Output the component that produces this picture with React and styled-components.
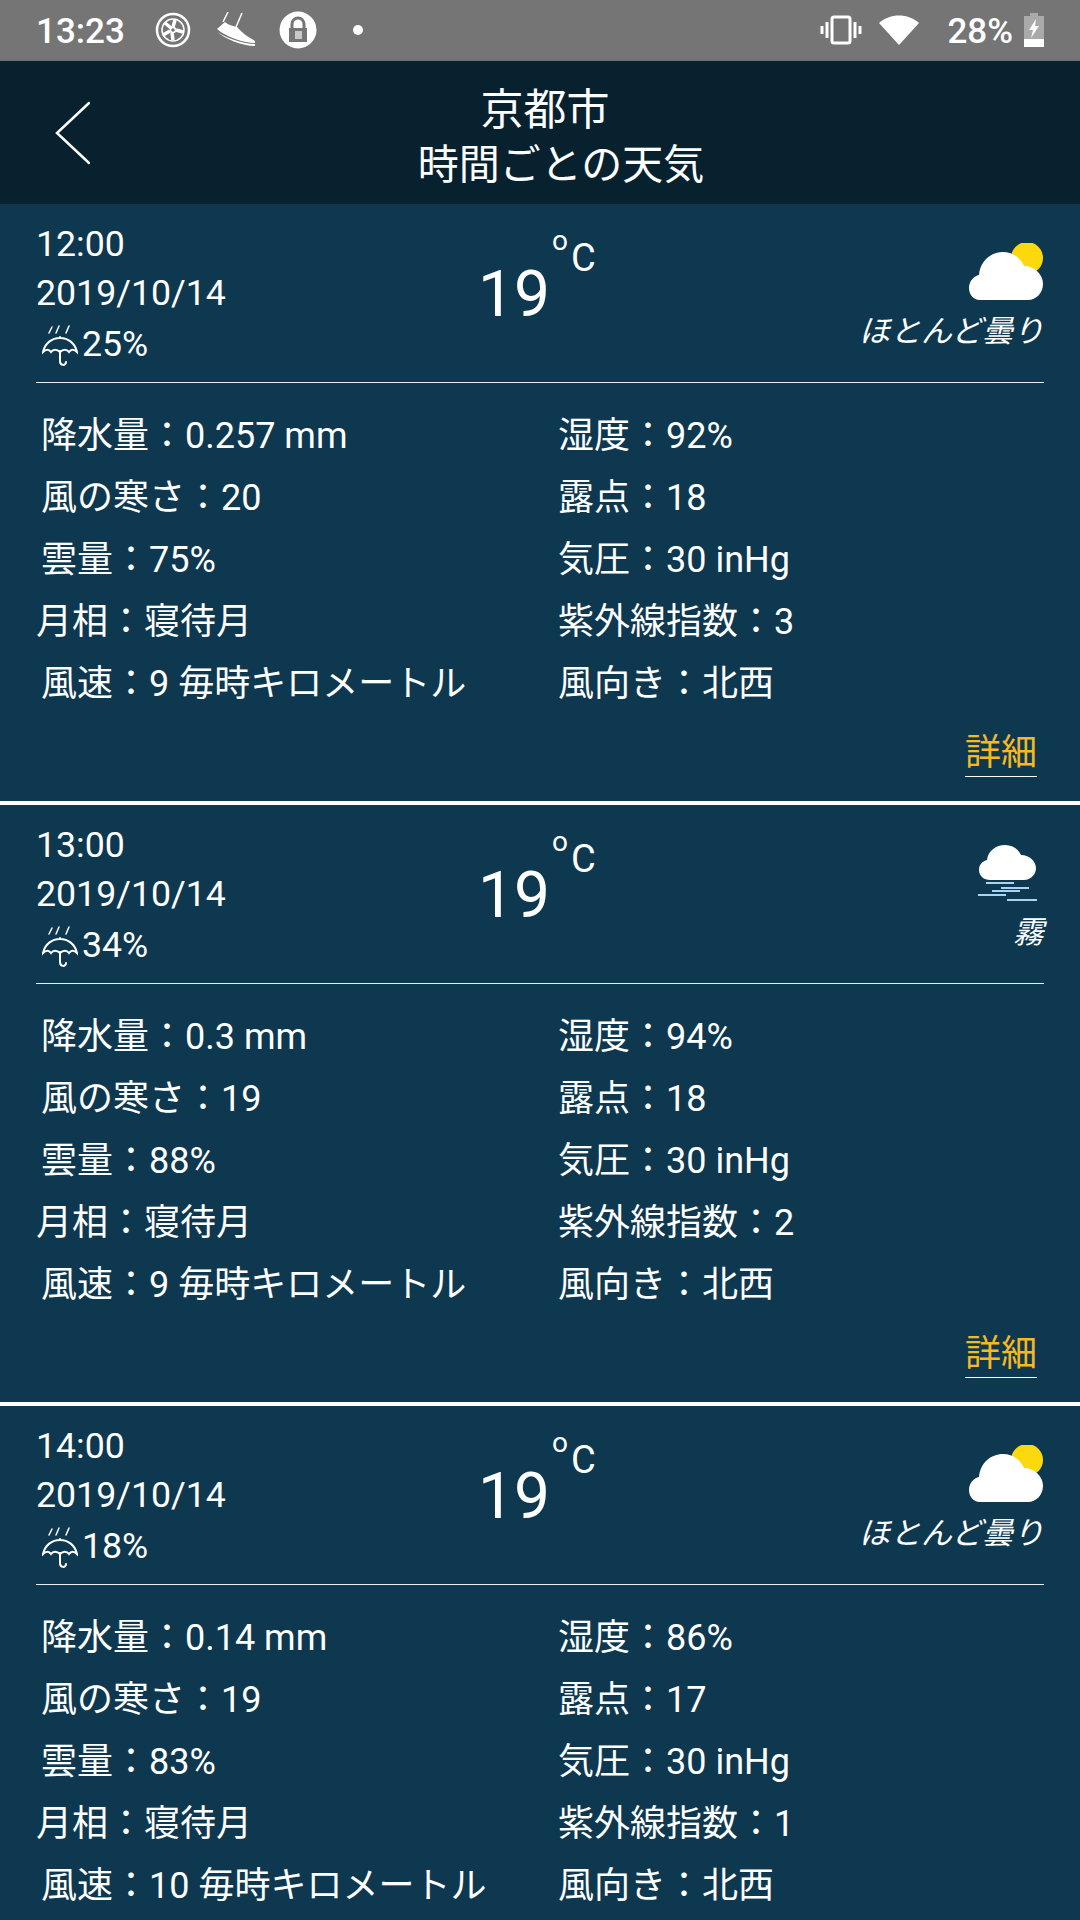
import React from "react";
import styled, { createGlobalStyle } from "styled-components";

const CARDS = [
  {
    time: "12:00",
    rain: "25%",
    icon: "cloudy",
    label: "ほとんど曇り",
    rows: [
      ["降水量：0.257 mm", "湿度：92%"],
      ["風の寒さ：20", "露点：18"],
      ["雲量：75%", "気圧：30 inHg"],
      ["月相：寝待月", "紫外線指数：3"],
      ["風速：9 毎時キロメートル", "風向き：北西"],
    ],
  },
  {
    time: "13:00",
    rain: "34%",
    icon: "fog",
    label: "霧",
    rows: [
      ["降水量：0.3 mm", "湿度：94%"],
      ["風の寒さ：19", "露点：18"],
      ["雲量：88%", "気圧：30 inHg"],
      ["月相：寝待月", "紫外線指数：2"],
      ["風速：9 毎時キロメートル", "風向き：北西"],
    ],
  },
  {
    time: "14:00",
    rain: "18%",
    icon: "cloudy",
    label: "ほとんど曇り",
    rows: [
      ["降水量：0.14 mm", "湿度：86%"],
      ["風の寒さ：19", "露点：17"],
      ["雲量：83%", "気圧：30 inHg"],
      ["月相：寝待月", "紫外線指数：1"],
      ["風速：10 毎時キロメートル", "風向き：北西"],
    ],
  },
];

const Global = createGlobalStyle`
  html, body {
    margin: 0;
    padding: 0;
    background: #0e3850;
  }
  body {
    font-family: Roboto, "Noto Sans CJK JP", sans-serif;
  }
`;

const Page = styled.div`
  width: 1080px;
  height: 1920px;
  overflow: hidden;
  background: #0e3850;
  color: #fff;
`;

const StatusBar = styled.div`
  height: 61px;
  box-sizing: border-box;
  background: #757575;
  border-bottom: 2px solid #6d7278;
  display: flex;
  align-items: center;
  padding: 0 35px 0 36px;
  font-size: 35px;
  font-weight: 500;
`;

const StatusLeft = styled.div`
  display: flex;
  align-items: center;
  flex: 1;
`;

const StatusIcon = styled.svg`
  display: block;
  flex: none;
  margin-left: ${(p) => p.$gap}px;
`;

const Clock = styled.span`
  width: 88px;
  padding-top: 3px;
`;

const Battery = styled.span`
  margin-left: 28px;
  padding-top: 3px;
`;

const Header = styled.header`
  height: 143px;
  background: #07212f;
  display: flex;
  align-items: center;
  position: relative;
`;

const BackButton = styled.svg`
  position: absolute;
  left: 54px;
  top: 40px;
`;

const Title = styled.h1`
  margin: 0;
  width: 100%;
  padding-top: 10px;
  text-align: center;
  font-weight: 400;
`;

const TitleLine = styled.div`
  font-size: ${(p) => p.$size}px;
  line-height: 55px;
  padding-left: ${(p) => p.$shift}px;
`;

const Card = styled.section`
  height: 597px;
  box-sizing: border-box;
  padding: 0 36px;
`;

const Separator = styled.div`
  height: 4px;
  background: #fff;
`;

const Top = styled.div`
  height: 179px;
  box-sizing: border-box;
  border-bottom: 1px solid #e8eef2;
  display: grid;
  grid-template-columns: 442px 201px 1fr;
  padding-top: 16px;
`;

const When = styled.div`
  font-size: 35.7px;
  line-height: 49px;
`;

const Rain = styled.div`
  display: flex;
  align-items: center;
  margin-top: 2px;
  padding-left: 6px;
  gap: 4px;
  height: 49px;
`;

const Temp = styled.div`
  display: flex;
  align-items: flex-start;
`;

const Degrees = styled.span`
  font-size: 64px;
  line-height: 64px;
  margin-top: 43px;
`;

const DegreeMark = styled.span`
  font-size: 28px;
  line-height: 30px;
  margin: 6px 0 0 2px;
`;

const Unit = styled.span`
  font-size: 38px;
  line-height: 40px;
  margin: 18px 0 0 3px;
`;

const Weather = styled.div`
  display: flex;
  flex-direction: column;
  align-items: flex-end;
`;

const WeatherIcon = styled.svg`
  display: block;
  margin: ${(p) => (p.$fog ? "24px 6px 0 0" : "23px 1px 0 0")};
`;

const WeatherLabel = styled.div`
  font-size: 31px;
  line-height: 40px;
  font-style: italic;
  margin-top: ${(p) => (p.$fog ? "12px" : "12px")};
`;

const Grid = styled.div`
  display: grid;
  grid-template-columns: 522px 1fr;
  grid-auto-rows: 62px;
  padding-top: 22px;
`;

const Cell = styled.div`
  font-size: 36px;
  line-height: 62px;
  white-space: nowrap;
  padding-left: ${(p) => (p.$flush ? "0" : "5px")};
`;

const Detail = styled.div`
  display: flex;
  justify-content: flex-end;
  margin-top: 16px;
  padding-right: 7px;
`;

const DetailLink = styled.a`
  color: #f5b921;
  font-size: 36px;
  line-height: 44px;
  padding-bottom: 1px;
  border-bottom: 1px solid #fff;
`;

const Umbrella = () => (
  <svg width="36" height="42" viewBox="0 0 36 42" fill="none" stroke="#fff" strokeWidth="2" strokeLinecap="round">
    <path d="M10 3l-3 6M17 2l-3 7M27 2l-3 7" strokeWidth="1.5" />
    <path d="M18 13v1M1 28C3 19 10 14 18 14s15 5 17 14c-3-3-6-3-8 0-2-3-6-3-9 0-3-3-7-3-9 0-2-3-5-3-8 0z" />
    <path d="M18 27v10c0 5 6 5 6 1" />
  </svg>
);

const CloudSun = () => (
  <WeatherIcon width="74" height="57" viewBox="0 0 74 57">
    <circle cx="58" cy="15" r="16" fill="#fcd80f" />
    <path
      d="M11 57C4 57 0 51 0 45c0-7 5-12 10-13 1-14 12-23 24-23 9 0 17 5 21 14 10 0 19 8 19 18 0 9-7 16-15 16z"
      fill="#fff"
    />
  </WeatherIcon>
);

const CloudFog = () => (
  <WeatherIcon $fog width="60" height="56" viewBox="0 0 60 56">
    <path
      d="M12 35C6 35 1 31 1 25c0-6 4-9 8-10 1-9 9-15 18-15 8 0 13 4 16 10 9 0 15 7 15 13 0 6-5 12-12 12z"
      fill="#fff"
    />
    <path d="M8 38h28M23 43h28M14 46h28M0 50h28M29 55h30" stroke="#a9d3f2" strokeWidth="2" />
  </WeatherIcon>
);

const App = () => (
  <Page>
    <Global />
    <StatusBar>
      <StatusLeft>
        <Clock>13:23</Clock>
        <StatusIcon $gap={31} width="36" height="36" viewBox="0 0 36 36" fill="none" stroke="#fff">
          <circle cx="18" cy="18" r="16" strokeWidth="2.5" />
          <circle cx="18" cy="18" r="11" strokeWidth="1.5" />
          <circle cx="18" cy="18" r="2.5" strokeWidth="1.5" />
          <path d="M20 8l-2 7M28 20l-7-2M18 28l-1-7M8 23l7-4M10 11l6 5" strokeWidth="3.5" />
        </StatusIcon>
        <StatusIcon $gap={23} width="42" height="36" viewBox="0 0 42 36" fill="#fff">
          <path d="M14 0l-5 10M28 1l-6 14" fill="none" stroke="#fff" strokeWidth="1.5" />
          <path d="M3 17L11 10c3 3 8 4 12 5l5 5c4 4 9 6 13 9v2C30 31 12 25 3 17z" />
          <path d="M3 20c10 6 26 12 38 12v2C28 34 12 27 3 20z" />
        </StatusIcon>
        <StatusIcon $gap={23} width="38" height="38" viewBox="0 0 38 38">
          <circle cx="19" cy="19" r="18.5" fill="#fff" />
          <path d="M13 17v-4a6 6 0 0 1 12 0v4" fill="none" stroke="#757575" strokeWidth="3" />
          <rect x="10" y="17" width="18" height="14" fill="#757575" />
          <rect x="16" y="20" width="7" height="8" fill="#c8c8c8" />
        </StatusIcon>
        <StatusIcon $gap={36} width="10" height="10" viewBox="0 0 10 10" fill="#fff">
          <circle cx="5" cy="5" r="5" />
        </StatusIcon>
      </StatusLeft>
      <StatusIcon $gap={0} width="42" height="30" viewBox="0 0 42 30" fill="none" stroke="#fff" strokeWidth="3">
        <rect x="12" y="2" width="18" height="26" rx="2" />
        <path d="M7 7v16M35 7v16M2 11v8M40 11v8" />
      </StatusIcon>
      <StatusIcon $gap={17} width="40" height="30" viewBox="0 0 40 30" fill="#fff">
        <path d="M0 8C11-2 29-2 40 8L20 30z" />
      </StatusIcon>
      <Battery>28%</Battery>
      <StatusIcon $gap={10} width="22" height="34" viewBox="0 0 22 34">
        <rect x="7" y="0" width="8" height="3" fill="#aaa" />
        <rect x="1" y="3" width="20" height="31" fill="#aaa" />
        <rect x="1" y="26" width="20" height="8" fill="#fff" />
        <path d="M13 6L6 17h4l-2 8 8-12h-4z" fill="#fff" />
      </StatusIcon>
    </StatusBar>
    <Header>
      <BackButton width="36" height="64" viewBox="0 0 36 64" fill="none" stroke="#fff" strokeWidth="2.5" strokeLinecap="round">
        <path d="M35 2L3 32l32 30" />
      </BackButton>
      <Title>
        <TitleLine $size={43} $shift={10}>京都市</TitleLine>
        <TitleLine $size={41} $shift={42}>時間ごとの天気</TitleLine>
      </Title>
    </Header>
    {CARDS.map((card, idx) => (
      <React.Fragment key={card.time}>
        <Card>
          <Top>
            <When>
              <div>{card.time}</div>
              <div>2019/10/14</div>
              <Rain>
                <Umbrella />
                {card.rain}
              </Rain>
            </When>
            <Temp>
              <Degrees>19</Degrees>
              <DegreeMark>o</DegreeMark>
              <Unit>C</Unit>
            </Temp>
            <Weather>
              {card.icon === "fog" ? <CloudFog /> : <CloudSun />}
              <WeatherLabel $fog={card.icon === "fog"}>{card.label}</WeatherLabel>
            </Weather>
          </Top>
          <Grid>
            {card.rows.map((row, rowIdx) => (
              <React.Fragment key={rowIdx}>
                <Cell $flush={rowIdx === 3}>{row[0]}</Cell>
                <Cell $flush>{row[1]}</Cell>
              </React.Fragment>
            ))}
          </Grid>
          {idx < CARDS.length - 1 && (
            <Detail>
              <DetailLink>詳細</DetailLink>
            </Detail>
          )}
        </Card>
        {idx < CARDS.length - 1 && <Separator />}
      </React.Fragment>
    ))}
  </Page>
);

export default App;
